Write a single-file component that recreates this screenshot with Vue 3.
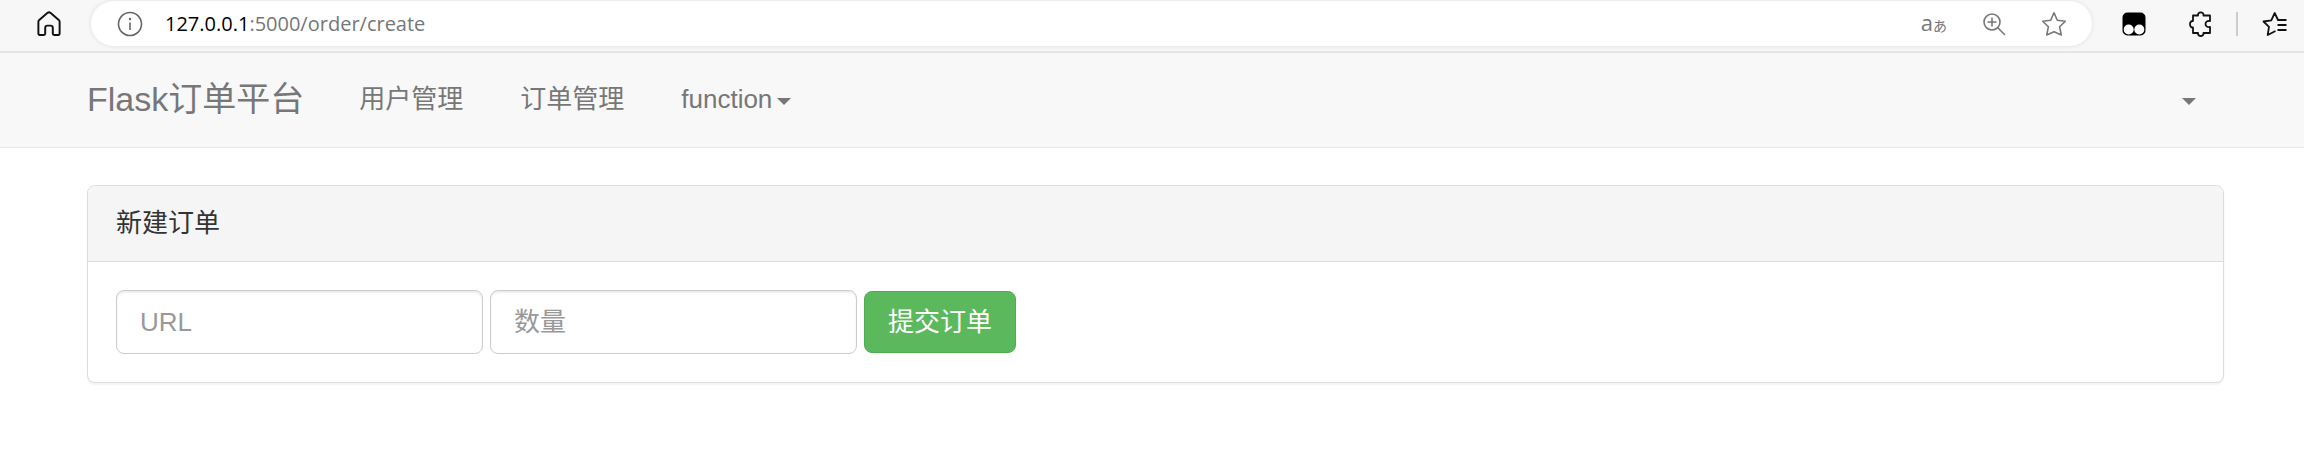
<script setup>
import { ref } from 'vue'

const navItems = ['用户管理', '订单管理']
const url = ref('')
const amount = ref('')
</script>

<template>
  <header class="toolbar">
    <button class="icon home" type="button" aria-label="Home">
      <svg width="26" height="26" viewBox="0 0 24 24" fill="none" stroke="#111" stroke-width="1.8" stroke-linejoin="round">
        <path d="M2.2 10 Q2.2 9 3 8.200L10.700 1.700Q12 .8 13.300 1.700L21 8.200Q21.800 9 21.800 10V20.500Q21.800 22.200 20 22.200H16.800Q15.500 22.200 15.500 20.800V15.500Q15.500 13.500 13.500 13.500H10.500Q8.500 13.500 8.500 15.500V20.800Q8.500 22.200 7.200 22.200H4Q2.200 22.200 2.200 20.500Z" />
      </svg>
    </button>
    <div class="address">
      <button class="icon" type="button" aria-label="Site information">
        <svg width="26" height="26" viewBox="0 0 26 26" fill="none" stroke="#666" stroke-width="1.6">
          <circle cx="13" cy="13" r="11.500" />
          <path d="M13 11.500V19" />
          <circle cx="13" cy="8" r="1.200" fill="#666" stroke="none" />
        </svg>
      </button>
      <a class="location" href="#"><span class="host">127.0.0.1</span>:5000/order/create</a>
      <div class="tools">
        <button class="icon translate" type="button">a<span class="kana">あ</span></button>
        <button class="icon" type="button" aria-label="Zoom">
          <svg width="24" height="24" viewBox="0 0 24 24" fill="none" stroke="#777" stroke-width="1.600">
            <circle cx="10" cy="10" r="8" />
            <path d="M10 5.500V14.500M5.500 10H14.500M15.800 15.800L23 23" />
          </svg>
        </button>
        <button class="icon" type="button" aria-label="Add to favorites">
          <svg width="26" height="26" viewBox="0 0 26 26" fill="none" stroke="#777" stroke-width="1.600" stroke-linejoin="round">
            <path d="M13 1.800L16.300 9.300L24.300 10.200L18.600 15.800L20.300 24L13 20.800L5.700 24L7.400 15.800L1.700 10.200L9.700 9.300Z" />
          </svg>
        </button>
      </div>
    </div>
    <div class="extensions">
      <button class="icon" type="button" aria-label="Extension">
        <svg width="24" height="24" viewBox="0 0 24 24">
          <rect x=".5" y=".5" width="23" height="23" rx="5" fill="#000" />
          <circle cx="6.700" cy="17.500" r="5" fill="#fff" />
          <circle cx="17.300" cy="17.500" r="5" fill="#fff" />
        </svg>
      </button>
      <button class="icon" type="button" aria-label="Extensions">
        <svg width="24" height="26" viewBox="0 0 24 26" fill="none" stroke="#111" stroke-width="1.800" stroke-linejoin="round">
          <path d="M5 4.500H10C9.500 .4 16 .4 15.500 4.500H22V10C16 9 16 17 22 16V22H15.500C16 26 9.500 26 10 22H5V16.500C1 17 1 9.500 5 10Z" />
        </svg>
      </button>
      <span class="separator"></span>
      <button class="icon" type="button" aria-label="Favorites">
        <svg width="26" height="26" viewBox="0 0 26 26" fill="none" stroke="#111" stroke-width="1.800" stroke-linejoin="round">
          <path d="M24.500 9H16L12.700 2L9.300 9.300L1.500 10.500L7 15.800L5.700 24L13.500 20M15.500 14H24.500M15.500 19H24.500" />
        </svg>
      </button>
    </div>
  </header>

  <nav class="navbar">
    <a class="brand" href="#">Flask订单平台</a>
    <a v-for="item in navItems" :key="item" class="nav-link" href="#">{{ item }}</a>
    <button class="nav-link" type="button">function<span class="caret"></span></button>
    <button class="nav-link account" type="button" aria-label="Account"><span class="caret"></span></button>
  </nav>

  <main class="content">
    <section class="panel">
      <div class="panel-heading">新建订单</div>
      <form class="panel-body" @submit.prevent>
        <input v-model="url" class="field" type="text" placeholder="URL" aria-label="URL">
        <input v-model="amount" class="field" type="text" placeholder="数量" aria-label="数量">
        <button class="submit" type="submit">提交订单</button>
      </form>
    </section>
  </main>
</template>

<style>
body {
  margin: 0;
  background: #fff;
}
</style>

<style scoped>
.toolbar,
.navbar,
.content {
  box-sizing: border-box;
  font-family: "Liberation Sans", "Noto Sans CJK SC", sans-serif;
  font-size: 26px;
  line-height: 37px;
}

button {
  margin: 0;
  padding: 0;
  border: 0;
  background: none;
  font: inherit;
  cursor: pointer;
}

a {
  text-decoration: none;
}

svg {
  display: block;
}

.toolbar {
  display: flex;
  align-items: center;
  height: 53px;
  padding: 0 16px 4px 36px;
  border-bottom: 2px solid #e5e5e5;
  background: #f7f7f7;
}

.icon {
  flex: none;
}

.address {
  display: flex;
  flex: 1;
  align-items: center;
  box-sizing: border-box;
  height: 45px;
  margin-left: 29px;
  padding: 0 25px 0 26px;
  border-radius: 24px;
  background: #fff;
  box-shadow: 0 0 5px rgba(0, 0, 0, 0.1);
}

.location {
  margin-left: 22px;
  color: #767676;
  font-family: "Open Sans", "Noto Sans", sans-serif;
  font-size: 20px;
}

.host {
  color: #000;
}

.tools {
  display: flex;
  align-items: center;
  gap: 35px;
  margin-left: auto;
}

.translate {
  color: #777;
  font-family: "Open Sans", "Noto Sans CJK JP", sans-serif;
  font-size: 22px;
  line-height: 24px;
}

.kana {
  font-size: 14px;
}

.extensions {
  display: flex;
  align-items: center;
  gap: 24px;
  margin-left: 30px;
}

.extensions .icon:first-child {
  margin-right: 18px;
}

.separator {
  width: 2px;
  height: 24px;
  background: #ccc;
}

.navbar {
  display: flex;
  align-items: center;
  gap: 1px;
  min-height: 95px;
  padding: 0 80px 2px 87px;
  border-bottom: 1px solid #e7e7e7;
  background: #f8f8f8;
}

.brand {
  margin-right: 26px;
  color: #777;
  font-size: 34px;
}

.nav-link {
  display: flex;
  align-items: center;
  padding: 0 28px;
  color: #777;
}

.account {
  height: 37px;
  margin-left: auto;
}

.caret {
  margin: 5px 0 0 5px;
  border-top: 7px solid #777;
  border-right: 7px solid transparent;
  border-left: 7px solid transparent;
}

.content {
  padding: 37px 80px 37px 87px;
}

.panel {
  border: 1px solid #ddd;
  border-radius: 8px;
  background: #fff;
  box-shadow: 0 2px 2px rgba(0, 0, 0, 0.05);
}

.panel-heading {
  padding: 19px 28px;
  border-bottom: 1px solid #ddd;
  border-radius: 7px 7px 0 0;
  background: #f5f5f5;
  color: #333;
}

.panel-body {
  display: flex;
  flex-wrap: wrap;
  align-items: center;
  gap: 7px;
  padding: 28px;
}

.field {
  box-sizing: border-box;
  width: 367px;
  height: 64px;
  margin: 0;
  padding: 11px 23px;
  border: 1px solid #ccc;
  border-radius: 8px;
  background: #fff;
  box-shadow: inset 0 2px 2px rgba(0, 0, 0, 0.075);
  color: #555;
  font: inherit;
}

.field::placeholder {
  color: #999;
  opacity: 1;
}

.submit {
  height: 62px;
  padding: 0 23px;
  border: 1px solid #4cae4c;
  border-radius: 8px;
  background: #5cb85c;
  color: #fff;
}
</style>
